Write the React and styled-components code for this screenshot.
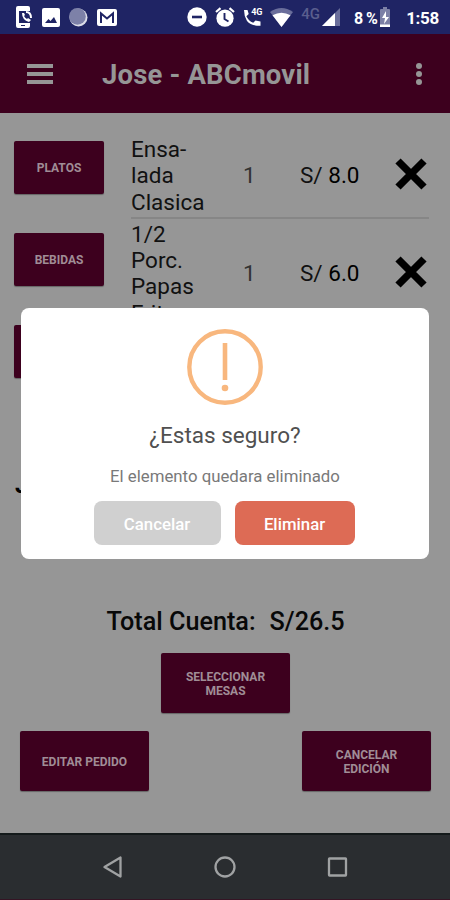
import React from 'react';
import styled, { createGlobalStyle } from 'styled-components';

const products = [
  { id: 1, name: ['Ensa-', 'lada', 'Clasica'], amount: 1, price: '8.0' },
  { id: 2, name: ['1/2', 'Porc.', 'Papas', 'Fritas'], amount: 1, price: '6.0' },
];

function StatusBar() {
  return (
    <Status>
      <Notifications>
        <svg width="17" height="22" viewBox="0 0 17 22">
          <path d="M2 0h10q2 0 2 2v3H3v12h11v3q0 2-2 2H2q-2 0-2-2V2q0-2 2-2z" fill="#fff" />
          <path d="M6 7q0 7 7 9l2-2-3-2-1 1q-2-1-3-3l1-1-1-2z" fill="#fff" />
          <path d="M10 6q5 0 5 6" stroke="#fff" strokeWidth="2" fill="none" />
          <path d="M5 19.500h4" stroke="#1f2464" />
        </svg>
        <svg width="18" height="19" viewBox="0 0 18 19">
          <rect width="18" height="19" rx="2" fill="#fff" />
          <path d="M3 15l3.500-4 2 2 3.500-4 3 6z" fill="#1f2464" />
        </svg>
        <svg width="19" height="19" viewBox="0 0 19 19">
          <circle cx="9.5" cy="9.5" r="9" fill="#dcdde8" />
          <circle cx="8.4" cy="8.4" r="8.4" fill="#7d81a8" />
        </svg>
        <svg width="20" height="17" viewBox="0 0 20 17">
          <rect width="20" height="17" rx="2" fill="#fff" />
          <path d="M4 14V4.500l6 5 6-5V14" fill="none" stroke="#1f2464" strokeWidth="2" />
        </svg>
      </Notifications>
      <System>
        <svg width="20" height="20" viewBox="0 0 20 20">
          <circle cx="10" cy="10" r="9.7" fill="#fff" />
          <path d="M5 10h10" stroke="#1f2464" strokeWidth="2.6" />
        </svg>
        <svg width="20" height="20" viewBox="0 0 20 20">
          <circle cx="10" cy="11.2" r="8.6" fill="#fff" />
          <path d="M1 5l4.500-3.800M19 5l-4.500-3.800" stroke="#fff" strokeWidth="2.200" />
          <path d="M9.500 6v6l4 2.500" fill="none" stroke="#1f2464" strokeWidth="1.900" />
        </svg>
        <Call>
          <svg width="20" height="20" viewBox="0 0 20 20">
            <path
              d="M1 3h3.500l1.200 4-2.300 2.200q2 4.500 6.800 6.600l2.300-2.200 5 1v4.200Q8 19 4 14 1 9 1 3z"
              fill="#fff"
            />
          </svg>
          <span>4G</span>
        </Call>
        <svg width="23" height="19" viewBox="0 0 23 19">
          <path d="M0 4q11.500-8 23 0L11.500 19z" fill="#6a6e9b" />
          <path d="M2.500 7.200q9-5 18 0l-9 11.800z" fill="#fff" />
        </svg>
        <Network>4G</Network>
        <svg width="18" height="18" viewBox="0 0 18 18">
          <path d="M18 0v18H0z" fill="#6a6e9b" />
          <path d="M13 5v13H0z" fill="#fff" />
        </svg>
        <Battery>8 %</Battery>
        <svg width="10" height="20" viewBox="0 0 10 20">
          <path d="M3 0h4v2h2q1 0 1 1v17H0V3q0-1 1-1h2z" fill="#7c80a6" />
          <path d="M0 17.500h10V20H0z" fill="#fff" />
          <path d="M6 4L2 11h3l-1 6 5-7H6z" fill="#fff" />
        </svg>
        <Clock>1:58</Clock>
      </System>
    </Status>
  );
}

function Header() {
  return (
    <Toolbar>
      <Menu>
        <span />
        <span />
        <span />
      </Menu>
      <h1>Jose - ABCmovil</h1>
      <More>
        <i />
        <i />
        <i />
      </More>
    </Toolbar>
  );
}

function Product({ name, amount, price }) {
  return (
    <Row>
      <Name>
        {name.map((line) => (
          <span key={line}>{line}</span>
        ))}
      </Name>
      <Amount>{amount}</Amount>
      <Price>
        S/ <b>{price}</b>
      </Price>
      <svg width="32" height="32" viewBox="0 0 32 32">
        <path d="M3 3l26 26M29 3L3 29" stroke="#000" strokeWidth="7.400" />
      </svg>
    </Row>
  );
}

function Confirm() {
  return (
    <Dialog>
      <svg width="76" height="76" viewBox="0 0 76 76">
        <circle cx="38" cy="38" r="35.700" fill="none" stroke="#f8b77e" strokeWidth="4.400" />
        <path d="M38 14v37" stroke="#f8b77e" strokeWidth="4.600" />
        <circle cx="38" cy="59" r="3.300" fill="#f8b77e" />
      </svg>
      <h2>¿Estas seguro?</h2>
      <p>El elemento quedara eliminado</p>
      <Actions>
        <DialogButton $width={127} $color="#d0d0d0">
          Cancelar
        </DialogButton>
        <DialogButton $width={120} $color="#dd6b55">
          Eliminar
        </DialogButton>
      </Actions>
    </Dialog>
  );
}

function App() {
  return (
    <Phone>
      <GlobalStyle />
      <StatusBar />
      <Header />
      <Order>
        <Categories>
          <CategoryButton>PLATOS</CategoryButton>
          <CategoryButton>BEBIDAS</CategoryButton>
          <CategoryButton />
          <User>J</User>
        </Categories>
        <Products>
          {products.map((product) => (
            <Product key={product.id} {...product} />
          ))}
        </Products>
      </Order>
      <Footer>
        <Total>
          <span>Total Cuenta:</span>
          <span>S/26.5</span>
        </Total>
        <ActionButton>
          SELECCIONAR
          <br />
          MESAS
        </ActionButton>
        <FooterRow>
          <ActionButton>EDITAR PEDIDO</ActionButton>
          <ActionButton>
            CANCELAR
            <br />
            EDICIÓN
          </ActionButton>
        </FooterRow>
      </Footer>
      <NavBar>
        <svg width="22" height="24" viewBox="0 0 22 24">
          <path d="M19.500 2.500v19L3.500 12z" fill="none" stroke="#a0a2a3" strokeWidth="2.300" strokeLinejoin="round" />
        </svg>
        <svg width="22" height="24" viewBox="0 0 22 24">
          <circle cx="11" cy="12" r="9.500" fill="none" stroke="#a0a2a3" strokeWidth="2.300" />
        </svg>
        <svg width="22" height="24" viewBox="0 0 22 24">
          <rect x="2" y="3.500" width="17" height="17" rx="0.500" fill="none" stroke="#a0a2a3" strokeWidth="2.300" />
        </svg>
      </NavBar>
      <Confirm />
    </Phone>
  );
}

export default App;

const GlobalStyle = createGlobalStyle`
  * {
    box-sizing: border-box;
  }

  body {
    margin: 0;
    font-family: Roboto, sans-serif;
  }

  svg {
    display: block;
    flex: none;
  }

  h1, h2, p {
    margin: 0;
  }
`;

const Phone = styled.div`
  position: relative;
  display: flex;
  flex-direction: column;
  width: 450px;
  height: 900px;
  overflow: hidden;
  background: #969696;
`;

const Status = styled.div`
  display: flex;
  justify-content: space-between;
  flex: none;
  height: 34px;
  padding: 0 11px 0 16px;
  background: #1f2464;
  color: #ffffff;
`;

const Notifications = styled.div`
  display: flex;
  align-items: center;
  gap: 9px;
`;

const System = styled.div`
  display: flex;
  align-items: center;
  white-space: nowrap;

  > svg:nth-child(2) {
    margin-left: 8px;
  }

  > svg:nth-child(4) {
    margin-left: 7px;
  }

  > svg:nth-child(6) {
    margin-left: 2px;
  }
`;

const Call = styled.div`
  position: relative;
  margin-left: 8px;

  span {
    position: absolute;
    top: 0;
    left: 8px;
    font: bold 9px / 10px Roboto, sans-serif;
  }
`;

const Network = styled.span`
  align-self: flex-start;
  margin: 5px 0 0 8px;
  color: #5a5e8e;
  font: 500 15px / 18px Roboto, sans-serif;
`;

const Battery = styled.span`
  margin: 3px 3px 0 14px;
  font: bold 16px / 20px Roboto, sans-serif;
  letter-spacing: -0.6px;
`;

const Clock = styled.span`
  margin: 2px 0 0 16px;
  font: bold 17px / 20px Roboto, sans-serif;
  letter-spacing: -0.3px;
`;

const Toolbar = styled.header`
  display: flex;
  align-items: center;
  flex: none;
  height: 79px;
  padding: 1px 28px 0 27px;
  background: #3d001e;
  color: #969696;

  h1 {
    flex: 1;
    margin: 2px 0 0 49px;
    font: bold 27.5px / 32px Roboto, sans-serif;
    letter-spacing: 0.15px;
  }
`;

const Menu = styled.div`
  display: grid;
  gap: 4px;

  span {
    width: 26px;
    height: 4px;
    background: #969696;
  }
`;

const More = styled.div`
  display: grid;
  gap: 2px;

  i {
    width: 6px;
    height: 6px;
    border-radius: 50%;
    background: #969696;
  }
`;

const Order = styled.main`
  display: flex;
  flex: none;
  height: 480px;
  padding: 28px 21px 0 14px;
`;

const Categories = styled.aside`
  display: flex;
  flex-direction: column;
  gap: 39px;
  width: 90px;
`;

const Button = styled.button`
  flex: none;
  padding: 1px 0 0;
  border: 0;
  border-radius: 2px;
  background: #3d001e;
  box-shadow: 0 1px 1px #00000055;
  color: #a08d96;
  font: bold 12px / 14px Roboto, sans-serif;
`;

const CategoryButton = styled(Button)`
  width: 90px;
  height: 53px;
`;

const User = styled.strong`
  margin: 54px 0 0 1px;
  font-size: 24px;
  line-height: 28px;
`;

const Products = styled.div`
  width: 298px;
  margin: -5px 0 0 27px;
`;

const Row = styled.div`
  display: flex;
  align-items: center;
  padding-bottom: 2px;
  border-bottom: 2px solid #868686;
  color: #111111;
  font-size: 22.5px;
  line-height: 26.3px;

  svg {
    margin-bottom: 2px;
  }

  & + & {
    padding-top: 2px;
  }
`;

const Name = styled.div`
  display: flex;
  flex-direction: column;
  width: 112px;
`;

const Amount = styled.span`
  width: 57px;
  color: #333333;
`;

const Price = styled.span`
  width: 95px;

  b {
    color: #000000;
    font-weight: normal;
  }
`;

const Footer = styled.footer`
  display: flex;
  flex-direction: column;
  align-items: center;
  flex: 1;
  padding: 14px 19px 0 20px;
`;

const Total = styled.div`
  display: flex;
  gap: 14px;
  margin-bottom: 16px;
  color: #080808;
  font: 500 25.2px / 30px Roboto, sans-serif;
`;

const ActionButton = styled(Button)`
  width: 129px;
  height: 60px;
`;

const FooterRow = styled.div`
  display: flex;
  justify-content: space-between;
  width: 100%;
  margin-top: 18px;
`;

const NavBar = styled.nav`
  display: flex;
  justify-content: center;
  align-items: center;
  gap: 91px;
  flex: none;
  height: 67px;
  border-top: 2px solid #141a1b;
  border-bottom: 1px solid #351424;
  background: #2a2d30;
`;

const Dialog = styled.section`
  position: absolute;
  top: 308px;
  left: 21px;
  display: flex;
  flex-direction: column;
  align-items: center;
  width: 408px;
  height: 251px;
  padding-top: 21px;
  border-radius: 8px;
  background: #ffffff;

  h2 {
    margin-top: 16px;
    color: #505050;
    font: 400 22.5px / 28px Roboto, sans-serif;
  }

  p {
    margin-top: 17px;
    color: #797979;
    font-size: 16.8px;
    line-height: 20px;
  }
`;

const Actions = styled.div`
  display: flex;
  gap: 14px;
  margin: 15px 2px 0 0;
`;

const DialogButton = styled.button`
  width: ${({ $width }) => $width}px;
  height: 44px;
  padding: 2px 0 0;
  border: 0;
  border-radius: 8px;
  background: ${({ $color }) => $color};
  color: #ffffff;
  font: 500 16.8px / 20px Roboto, sans-serif;
`;
